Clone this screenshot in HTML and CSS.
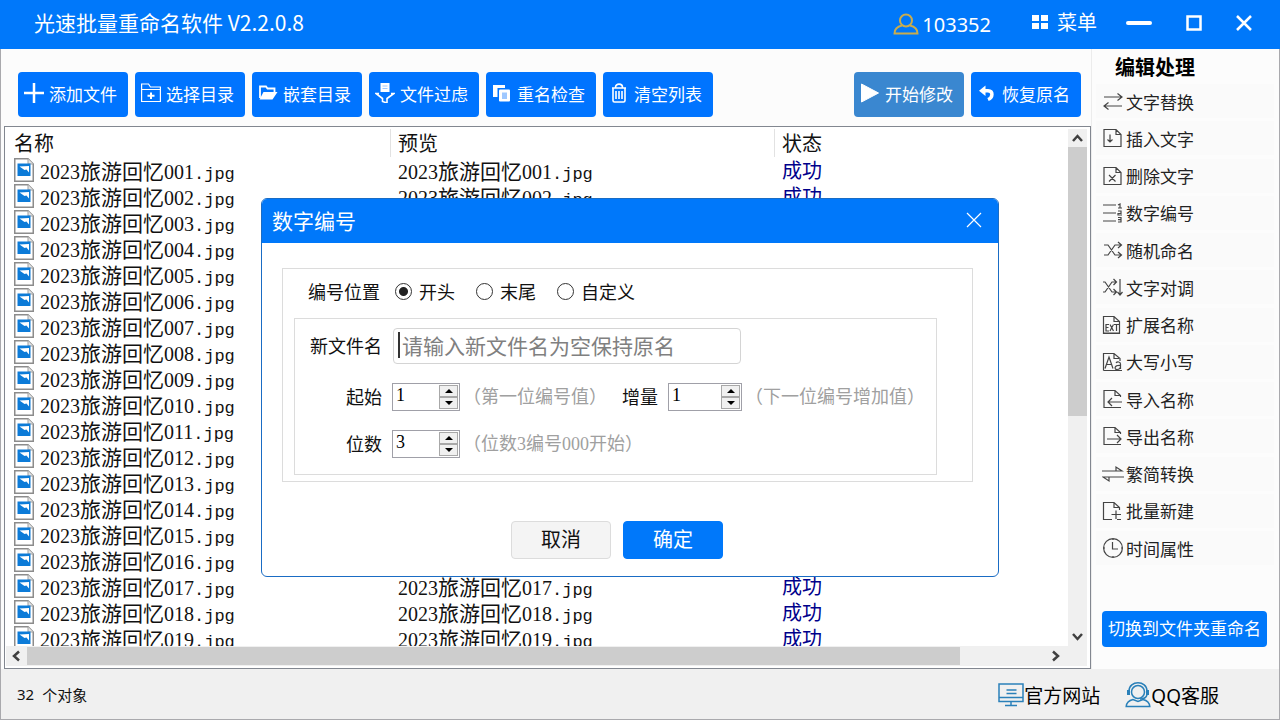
FILE: index.html
```html
<!DOCTYPE html>
<html lang="zh-CN">

<head>
    <meta charset="UTF-8">
    <meta name="viewport" content="width=device-width, initial-scale=1.0">
    <title>光速批量重命名软件 V2.2.0.8</title>
    <link rel="stylesheet" href="styles.css">
</head>

<body>
    <div class="window">
        <header class="titlebar">
            <h1>光速批量重命名软件 V2.2.0.8</h1>
            <button class="user" type="button">
                <svg width="26" height="22" viewBox="0 0 26 22" fill="none" stroke="#c9ac4e" stroke-width="2">
                    <circle cx="13" cy="7.500" r="6" />
                    <path d="M9 12.500C4.500 13.500 1.500 16 1.500 20.500H24.500C24.500 16 21.500 13.500 17 12.500" />
                </svg>
                103352
            </button>
            <button class="menu" type="button">
                <svg width="16" height="14" viewBox="0 0 16 14" fill="#fff">
                    <path d="M0 0H7V6H0ZM9 0H16V6H9ZM0 8H7V14H0ZM9 8H16V14H9Z" />
                </svg>
                菜单
            </button>
            <div class="win-buttons">
                <button type="button" aria-label="最小化">
                    <svg width="26" height="18" viewBox="0 0 26 18" fill="none" stroke="#fff" stroke-width="4" stroke-linecap="round">
                        <path d="M2 9H24" />
                    </svg>
                </button>
                <button type="button" aria-label="最大化">
                    <svg width="16" height="16" viewBox="0 0 16 16" fill="none" stroke="#fff" stroke-width="2.500">
                        <path d="M1.500 1.500H14.500V14.500H1.500Z" />
                    </svg>
                </button>
                <button type="button" aria-label="关闭">
                    <svg width="16" height="16" viewBox="0 0 16 16" fill="none" stroke="#fff" stroke-width="2.500">
                        <path d="M1 1L15 15M15 1L1 15" />
                    </svg>
                </button>
            </div>
        </header>

        <div class="content">
            <main class="main">
                <div class="toolbar">
                    <button class="tool" type="button">
                        <svg viewBox="0 0 20 20" fill="none" stroke="#fff" stroke-width="2.500">
                            <path d="M10 0V20M0 10H20" />
                        </svg>
                        添加文件
                    </button>
                    <button class="tool" type="button">
                        <svg viewBox="0 0 20 20" fill="none" stroke="#fff" stroke-width="1.200">
                            <path d="M.600 18.500V1H7.500L9.500 4H19.400V18.500ZM.600 6.500H19.400" />
                            <path d="M10 9.500V16M6.500 12.700H13.500" stroke-width="2" />
                        </svg>
                        选择目录
                    </button>
                    <button class="tool" type="button">
                        <svg viewBox="0 0 20 20" fill="none" stroke="#fff" stroke-width="1.800">
                            <path d="M2 15V3.500H8L9.500 5.500H16.500V9" />
                            <path d="M1.500 16.500L5.500 9H19.500L14.500 16.500Z" fill="#fff" stroke="none" />
                        </svg>
                        嵌套目录
                    </button>
                    <button class="tool" type="button">
                        <svg viewBox="0 0 20 20" fill="none" stroke="#fff" stroke-width="1.600">
                            <path d="M5.500 0H14.500V9H5.500Z" fill="#fff" stroke="none" />
                            <path d="M7.500 3H12.500M7.500 5.500H12.500" stroke="#9fc8ff" stroke-width="1" />
                            <path d="M4 10.500H1L7.500 15.500V18.500L12 20V15.500L19 10.500H16" />
                        </svg>
                        文件过虑
                    </button>
                    <button class="tool" type="button">
                        <svg viewBox="0 0 20 20">
                            <path d="M1 2H13V5H5.500V14H1Z" fill="#fff" />
                            <rect x="7" y="6.500" width="11" height="12" rx="1" fill="#fff" />
                            <path d="M10 9.500H15V16H10Z" fill="#9fc8ff" />
                        </svg>
                        重名检查
                    </button>
                    <button class="tool" type="button">
                        <svg viewBox="0 0 20 20" fill="none" stroke="#fff" stroke-width="1.600">
                            <path d="M3 5H17M6.500 4.500C6.500 0 13.500 0 13.500 4.500M4 5.500V17.500Q4 19 5.500 19H14.500Q16 19 16 17.500V5.500" />
                            <path d="M7 8V16M10 8V16M13 8V16" />
                        </svg>
                        清空列表
                    </button>
                    <button class="tool start" type="button">
                        <svg viewBox="0 0 20 20" fill="#fff" stroke="#fff" stroke-linejoin="round">
                            <path d="M1.500 1L18.500 10L1.500 19Z" />
                        </svg>
                        开始修改
                    </button>
                    <button class="tool" type="button">
                        <svg viewBox="0 0 20 20" fill="none" stroke="#fff" stroke-width="3.500">
                            <path d="M8.500 2.500L2 7.800L8.500 13Z" fill="#fff" stroke="none" />
                            <path d="M7 7.800H11C16.500 8 16 14.500 11 16.500" />
                        </svg>
                        恢复原名
                    </button>
                </div>

                <div class="list">
                    <div class="list-view">
                        <table>
                            <thead>
                                <tr>
                                    <th>名称</th>
                                    <th>预览</th>
                                    <th>状态</th>
                                </tr>
                            </thead>
                            <tbody id="files"></tbody>
                        </table>
                    </div>
                    <div class="vbar">
                        <svg width="19" height="18" viewBox="0 0 19 18"><path d="M5 12L9.500 7L14 12" /></svg>
                        <div class="vthumb"></div>
                        <svg width="19" height="18" viewBox="0 0 19 18"><path d="M5 6L9.500 11L14 6" /></svg>
                    </div>
                    <div class="hbar">
                        <svg width="21" height="18" viewBox="0 0 21 18"><path d="M13 4.500L8 9L13 13.500" /></svg>
                        <div class="hthumb"></div>
                        <svg width="21" height="18" viewBox="0 0 21 18"><path d="M8 4.500L13 9L8 13.500" /></svg>
                    </div>
                </div>
            </main>

            <aside class="side">
                <h2>编辑处理</h2>
                <nav class="side-list">
                    <button type="button"><svg viewBox="0 0 22 20"><path d="M2 6H20M15.500 2.500L20 6L15.500 9.500M20 15H2M6.500 11.500L2 15L6.500 18.500" /></svg>文字替换</button>
                    <button type="button"><svg viewBox="0 0 22 20"><path d="M2 1.500H14L19 6.500V18.500H2ZM14 1.500V6.500H19M8 6.500V14M5.500 11.500L8 14L10.500 11.500" /></svg>插入文字</button>
                    <button type="button"><svg viewBox="0 0 22 20"><path d="M2 1.500H14L19 6.500V18.500H2ZM14 1.500V6.500H19M7 9L13.500 15.500M13.500 9L7 15.500" /></svg>删除文字</button>
                    <button type="button"><svg viewBox="0 0 22 20"><path d="M1 2H14M1 10H14M1 18H14M16 2L18 1V5M16 5H20M16 8H19V10.500H16V12H20M16 14.500H19V19H16M16 16.700H19" /></svg>数字编号</button>
                    <button type="button"><svg viewBox="0 0 22 20"><path d="M2 5H6L13 15H19M2 15H6L13 5H19M16 2L19.500 5L16 8M16 12L19.500 15L16 18" /></svg>随机命名</button>
                    <button type="button"><svg viewBox="0 0 22 20"><path d="M1 5H3L10 15H14M1 15H3L10 5H14M11.500 2L14.500 5L11.500 8M11.500 12L14.500 15L11.500 18M18 2V18M15.500 15L18 18L20.500 15" /></svg>文字对调</button>
                    <button type="button"><svg viewBox="0 0 22 20"><path d="M1.500 9V1.500H12L17.500 6.500V18.500H1.500V9M12 1.500V6.500H17.500M7 9.500H4V16H7M4 12.500H6.500M8 9.500L11.500 16M11.500 9.500L8 16M12 9.500H17M14.500 9.500V16M2 18H18" /></svg>扩展名称</button>
                    <button type="button"><svg viewBox="0 0 22 20"><path d="M1.500 18.500V1.500H12L18 6.500V9M12 1.500V6.500H17M1.500 18.500H20M3 16.500L7 5L11 16.500M4.500 12.500H9.500M14 11C15 9.500 18.500 9.500 18.500 12V17M18.500 13.500C12 13 12 17.500 15 17.500C17 17.500 18.500 16 18.500 14" /></svg>大写小写</button>
                    <button type="button"><svg viewBox="0 0 22 20"><path d="M19 18.500H2V1.500H13L18.500 6.500V8M13 1.500V6.500H18.500M20 13H6M10 9L6 13L10 17" /></svg>导入名称</button>
                    <button type="button"><svg viewBox="0 0 22 20"><path d="M19 18.500H2V1.500H13L18.500 6.500V8M13 1.500V6.500H18.500M5 13H19M15 9L19 13L15 17" /></svg>导出名称</button>
                    <button type="button"><svg viewBox="0 0 22 20"><path d="M0 7H20L14 3V7M22 13H1L7 17V13" /></svg>繁简转换</button>
                    <button type="button"><svg viewBox="0 0 22 20"><path d="M10 18.500H1.500V1.500H12L17.500 6.500V9M12 1.500V6.500H17.500M14 9.500V18M9.500 13.500H19M15 18.500H19" /></svg>批量新建</button>
                    <button type="button"><svg viewBox="0 0 22 20"><path d="M11 .600A9.400 9.400 0 1 0 11 19.400A9.400 9.400 0 1 0 11 .600ZM10.500 4V11H16M11 0V2M11 18V20M1 10H3M19 10H21" /></svg>时间属性</button>
                </nav>
                <button class="switch" type="button">切换到文件夹重命名</button>
            </aside>
        </div>

        <footer class="statusbar">
            <span class="count"><span>32</span><span>个对象</span></span>
            <a href="#">
                <svg width="26" height="24" viewBox="0 0 26 24" fill="none" stroke="#2a80b9" stroke-width="1.500">
                    <path d="M1 1H25V18.500H1ZM1 14.500H25M13 18.500V22M7 22.500H19M8.500 7H18.500M8.500 10.500H18.500" />
                </svg>
                官方网站
            </a>
            <a href="#">
                <svg width="26" height="26" viewBox="0 0 26 26" fill="none" stroke="#2a80b9" stroke-width="1.500">
                    <circle cx="13" cy="10" r="6.500" />
                    <path d="M4 9C4 -2 22 -2 22 9" />
                    <path d="M3.500 8V13M22.500 8V13" stroke-width="3" />
                    <path d="M22 13C21 16 18 17 15 17" />
                    <path d="M8 17.500C4 18.500 1.500 21 1.200 24.500H24.800C24.500 21 22 18.500 18 17.500L13 19.500Z" />
                </svg>
                QQ客服
            </a>
        </footer>

        <div class="dialog" role="dialog" aria-labelledby="dialog-title">
            <div class="dialog-head">
                <h2 id="dialog-title">数字编号</h2>
                <button type="button" aria-label="关闭">
                    <svg width="16" height="16" viewBox="0 0 16 16" fill="none" stroke="#fff" stroke-width="1.200">
                        <path d="M1 1L15 15M15 1L1 15" />
                    </svg>
                </button>
            </div>
            <form>
                <div class="group">
                    <div class="position" role="radiogroup" aria-labelledby="pos-label">
                        <span id="pos-label">编号位置</span>
                        <label><input type="radio" name="position" checked>开头</label>
                        <label><input type="radio" name="position">末尾</label>
                        <label><input type="radio" name="position">自定义</label>
                    </div>
                    <div class="fields">
                        <label for="newname">新文件名</label>
                        <div class="name-box">
                            <input type="text" id="newname" placeholder="请输入新文件名为空保持原名">
                            <span class="caret"></span>
                        </div>

                        <label for="start">起始</label>
                        <div class="spin">
                            <input type="number" id="start" value="1">
                            <div class="arrows">
                                <button type="button" aria-label="增加"><svg viewBox="0 0 8 4"><path d="M0 4L4 0L8 4Z" /></svg></button>
                                <button type="button" aria-label="减少"><svg viewBox="0 0 8 4"><path d="M0 0L4 4L8 0Z" /></svg></button>
                            </div>
                        </div>
                        <span class="hint">（第一位编号值）</span>
                        <label for="step">增量</label>
                        <div class="spin">
                            <input type="number" id="step" value="1">
                            <div class="arrows">
                                <button type="button" aria-label="增加"><svg viewBox="0 0 8 4"><path d="M0 4L4 0L8 4Z" /></svg></button>
                                <button type="button" aria-label="减少"><svg viewBox="0 0 8 4"><path d="M0 0L4 4L8 0Z" /></svg></button>
                            </div>
                        </div>
                        <span class="hint">（下一位编号增加值）</span>

                        <label for="digits">位数</label>
                        <div class="spin">
                            <input type="number" id="digits" value="3">
                            <div class="arrows">
                                <button type="button" aria-label="增加"><svg viewBox="0 0 8 4"><path d="M0 4L4 0L8 4Z" /></svg></button>
                                <button type="button" aria-label="减少"><svg viewBox="0 0 8 4"><path d="M0 0L4 4L8 0Z" /></svg></button>
                            </div>
                        </div>
                        <span class="hint wide">（位数3编号000开始）</span>
                    </div>
                </div>
                <div class="actions">
                    <button type="button">取消</button>
                    <button class="ok" type="button">确定</button>
                </div>
            </form>
        </div>
    </div>
    <script src="script.js"></script>
</body>

</html>
```

FILE: styles.css
```css
* {
    box-sizing: border-box;
}

body {
    margin: 0;
    font-family: "Noto Sans CJK SC", sans-serif;
    font-size: 17px;
    color: #111;
}

h1,
h2 {
    margin: 0;
    font-weight: normal;
}

button {
    padding: 0;
    border: none;
    background: none;
    color: inherit;
    font-family: inherit;
    font-size: inherit;
    white-space: nowrap;
    cursor: pointer;
}

svg {
    flex: none;
    display: block;
}

.window {
    position: relative;
    display: flex;
    flex-direction: column;
    height: 100vh;
    overflow: hidden;
    background-color: #fcfcfc;
}

/* title bar */
.titlebar {
    display: flex;
    align-items: center;
    height: 49px;
    padding: 0 28px 6px 34px;
    background-color: #0078fa;
    color: #fff;
}

.titlebar h1 {
    flex: 1;
    font-size: 21px;
    line-height: 30px;
}

.user,
.menu {
    display: flex;
    align-items: center;
    font-size: 20px;
}

.user {
    gap: 3px;
    padding-top: 5px;
    margin-right: 41px;
    font-family: "Noto Sans", sans-serif;
}

.menu {
    gap: 9px;
    margin-right: 29px;
}

.win-buttons {
    display: flex;
    align-items: center;
    gap: 34px;
    padding-top: 2px;
}

/* content */
.content {
    flex: 1;
    display: flex;
    min-height: 0;
    border: 1px solid #a9a9ad;
    border-width: 0 1px;
}

.main {
    flex: 1;
    min-width: 0;
    display: flex;
    flex-direction: column;
    padding-left: 3px;
}

.toolbar {
    display: flex;
    gap: 7px;
    padding: 23px 10px 9px 14px;
}

.tool {
    display: flex;
    align-items: center;
    gap: 5px;
    width: 110px;
    height: 45px;
    padding: 0 0 3px 6px;
    border-radius: 4px;
    background-color: #0074ff;
    color: #fff;
}

.tool svg {
    width: 20px;
    height: 20px;
}

.start {
    margin-left: auto;
    background-color: #3a87d0;
}

/* file list */
.list {
    flex: 1;
    min-height: 0;
    display: grid;
    grid-template-columns: 1fr 19px;
    grid-template-rows: 1fr 20px;
    padding: 2px 3px 2px 1px;
    border: 1px solid #828790;
    background-color: #fff;
}

.list-view {
    overflow: hidden;
}

table {
    width: 100%;
    table-layout: fixed;
    border-spacing: 0;
    font-size: 21px;
    line-height: 26px;
}

th,
td {
    height: 26px;
    padding: 0 0 0 8px;
    text-align: left;
    font-weight: normal;
    white-space: nowrap;
}

th {
    height: 28px;
    width: 384px;
    font-size: 20px;
}

th + th {
    border-left: 1px solid #e2e2e2;
    padding-left: 7px;
}

th:last-child {
    width: auto;
}

.file {
    display: flex;
    align-items: center;
    gap: 6px;
    height: 26px;
}

.num,
.ext {
    line-height: 1;
}

.num {
    font-family: "Liberation Serif", serif;
    font-size: 20px;
}

.ext {
    font-family: "Liberation Mono", monospace;
    font-size: 17px;
}

.status {
    font-size: 20px;
    color: #00008b;
}

.vbar,
.hbar {
    display: flex;
    background-color: #f0f0f0;
}

.vbar {
    flex-direction: column;
    justify-content: space-between;
}

.hbar {
    grid-column: 1 / 3;
    align-items: center;
    padding-right: 21px;
}

.vbar path,
.hbar path {
    fill: none;
    stroke: #404040;
    stroke-width: 2.500;
}

.vthumb {
    height: 52%;
    margin-bottom: auto;
    background-color: #cdcdcd;
}

.hthumb {
    width: 88%;
    height: 18px;
    margin-right: auto;
    background-color: #cdcdcd;
}

/* right panel */
.side {
    display: flex;
    flex-direction: column;
    width: 188px;
    padding: 3px 5px 22px 4px;
    border-left: 1px solid #ececec;
}

.side h2 {
    padding-left: 19px;
    font-size: 20px;
    font-weight: bold;
    line-height: 30px;
    color: #000;
}

.side-list {
    flex: 1;
    display: flex;
    flex-direction: column;
    justify-content: space-between;
    margin: 2px 0 46px;
}

.side-list button {
    display: flex;
    align-items: center;
    gap: 2px;
    height: 34px;
    padding-left: 6px;
    background-color: #fafafa;
    color: #222;
}

.side-list svg {
    width: 22px;
    height: 20px;
    fill: none;
    stroke: #444;
    stroke-width: 1.200;
}

.switch {
    height: 36px;
    margin: 0 7px 0 6px;
    padding-bottom: 3px;
    border-radius: 4px;
    background-color: #0078fa;
    color: #fff;
}

/* status bar */
.statusbar {
    display: flex;
    align-items: center;
    gap: 25px;
    height: 51px;
    padding: 1px 60px 0 16px;
    border: 1px solid #a9a9ad;
    border-top: none;
    background-color: #f0f0f0;
    font-family: "Noto Sans", "Noto Sans CJK SC", sans-serif;
    font-size: 19px;
}

.count {
    display: flex;
    gap: 8px;
    margin-right: auto;
    font-size: 15px;
}

.statusbar a {
    display: flex;
    align-items: center;
    color: #000;
    text-decoration: none;
}

/* dialog */
.dialog {
    position: absolute;
    top: 198px;
    left: 261px;
    width: 738px;
    border: 1px solid #1a6cc4;
    border-radius: 6px;
    overflow: hidden;
    background-color: #fff;
    font-size: 18px;
}

.dialog-head {
    display: flex;
    align-items: center;
    justify-content: space-between;
    height: 44px;
    padding: 0 16px 2px 10px;
    background-color: #0078fa;
    color: #fff;
}

.dialog-head h2 {
    font-size: 21px;
    line-height: 30px;
}

.group {
    margin: 25px 25px 0 20px;
    padding: 0 35px 6px 11px;
    border: 1px solid #dcdcdc;
}

.position {
    display: flex;
    align-items: center;
    gap: 21px;
    height: 49px;
    padding: 0 0 5px 14px;
}

.position span {
    margin-right: -6px;
}

.position label {
    display: flex;
    align-items: center;
    gap: 7px;
}

.position input {
    appearance: none;
    width: 17px;
    height: 17px;
    margin: 0;
    border: 1px solid #333;
    border-radius: 50%;
}

.position input:checked {
    background: radial-gradient(circle, #222 4px, #fff 5px);
}

.fields {
    display: grid;
    grid-template-columns: 72px 78px 162px 36px 84px 1fr;
    grid-template-rows: 36px 28px 28px;
    align-items: center;
    row-gap: 19px;
    padding: 9px 0 16px 15px;
    border: 1px solid #dcdcdc;
}

.fields label {
    text-align: right;
    line-height: 26px;
    padding-bottom: 2px;
}

.name-box {
    position: relative;
    grid-column: 2 / 7;
    width: 348px;
    margin-left: 11px;
}

.name-box input {
    display: block;
    width: 100%;
    height: 36px;
    padding: 0 8px 3px;
    border: 1px solid #d4d4d4;
    border-radius: 4px;
    outline: none;
    font-family: inherit;
    font-size: 21px;
}

.name-box input::placeholder {
    color: #808080;
}

.caret {
    position: absolute;
    top: 4px;
    left: 5px;
    width: 2px;
    height: 26px;
    background-color: #333;
}

.spin {
    display: flex;
    height: 28px;
    margin-left: 10px;
    padding: 1px;
    border: 1px solid #a0a0a8;
}

.spin input {
    appearance: textfield;
    flex: 1;
    min-width: 0;
    width: 0;
    padding: 0 0 4px 2px;
    border: none;
    outline: none;
    font-family: "Liberation Serif", serif;
    font-size: 18px;
}

.spin input::-webkit-inner-spin-button {
    appearance: none;
    margin: 0;
}

.arrows {
    display: flex;
    flex-direction: column;
    width: 19px;
}

.arrows button {
    flex: 1;
    display: flex;
    align-items: center;
    justify-content: center;
    border: 1px solid #a8a8a8;
    background-color: #f0f0f0;
}

.arrows svg {
    width: 8px;
    height: 4px;
}

.hint {
    padding-left: 3px;
    color: #a0a0a0;
    font-family: "Liberation Serif", "Noto Sans CJK SC", serif;
    line-height: 26px;
    white-space: nowrap;
}

.wide {
    grid-column: 3 / 7;
}

.actions {
    display: flex;
    gap: 12px;
    padding: 39px 0 17px 249px;
}

.actions button {
    width: 100px;
    height: 38px;
    padding-bottom: 3px;
    border: 1px solid #dcdcdc;
    border-radius: 4px;
    background-color: #f4f4f4;
    font-size: 20px;
}

.actions .ok {
    border-color: #0078fa;
    background-color: #0078fa;
    color: #fff;
}
```

FILE: script.js
```js
const files = document.getElementById("files");
const icon = `<svg width="20" height="24" viewBox="0 0 20 24">
    <path d="M.750 .750H14L19.250 6V23.250H.750Z" fill="#fff" stroke="#8c8c8c" stroke-width="1.500"/>
    <path d="M14 .750V6H19.250" fill="#e4e4e4" stroke="#a0a0a0"/>
    <path d="M3.500 5.500H16.500V18H3.500Z" fill="#0c7bd8"/>
    <path d="M5.500 8.500L15 8V14.500L12.500 11.500L10.500 12Z" fill="#fff"/>
</svg>`;

for (let i = 1; i <= 19; i++) {
    const no = String(i).padStart(3, "0");
    const name = `<span class="num">2023</span>旅游回忆<span class="num">${no}</span><span class="ext">.jpg</span>`;
    files.innerHTML += `<tr>
        <td><div class="file">${icon}<span>${name}</span></div></td>
        <td>${name}</td>
        <td class="status">成功</td>
    </tr>`;
}
```
